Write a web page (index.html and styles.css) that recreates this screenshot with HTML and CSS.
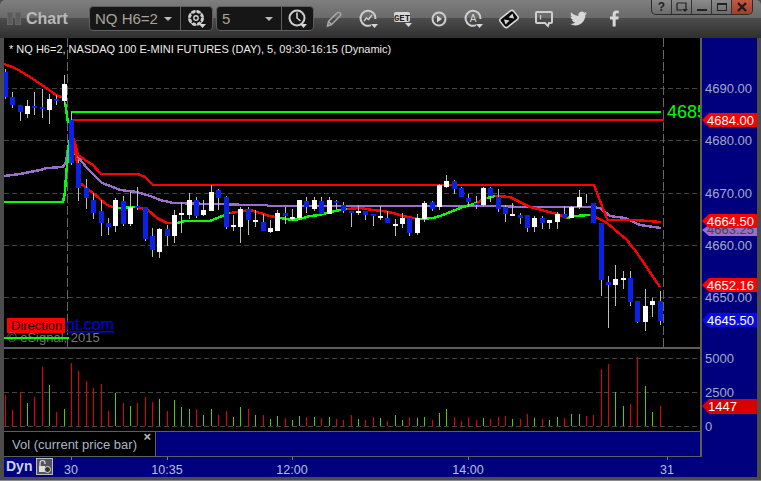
FILE: index.html
```html
<!DOCTYPE html>
<html lang="en">
<head>
<meta charset="utf-8">
<title>Chart</title>
<link rel="stylesheet" href="styles.css">
</head>
<body>
<div class="window">
  <header class="titlebar">
    <div class="brand"><span class="grip"></span><span class="grip"></span><span class="brand-name">Chart</span></div>
    <div class="combo combo-symbol">
      <span class="combo-field">NQ H6=2<i class="caret"></i></span>
      <span class="combo-btn">
        <svg class="icon" width="22" height="22" viewBox="0 0 22 22"><circle class="ln" cx="10" cy="10" r="6.5" stroke-width="3" stroke-dasharray="3.5 1.6"/><circle class="ln" cx="10" cy="10" r="7" stroke-width="1.2"/><circle class="ln" cx="10" cy="10" r="2.2" stroke-width="1.4"/><path class="fl" d="M13 16h7l-3.500 4z"/></svg>
      </span>
    </div>
    <div class="combo combo-interval">
      <span class="combo-field">5<i class="caret"></i></span>
      <span class="combo-btn">
        <svg class="icon" width="22" height="22" viewBox="0 0 22 22"><circle class="ln" cx="10" cy="10" r="7.500" stroke-width="2"/><path class="ln" stroke-width="1.600" d="M10 4.500V10l3.500 3"/><path class="fl" d="M13 16h7l-3.500 4z"/></svg>
      </span>
    </div>
    <nav class="tools">
      <span class="tool"><svg width="18" height="18" viewBox="0 0 18 18"><path class="ln dim" stroke-width="1.500" d="M2.500 16l1-4.500L12 3a1.800 1.800 0 0 1 3 3l-8.500 8.500zM3.500 11.500l3 3"/></svg></span>
      <span class="tool"><svg width="22" height="22" viewBox="0 0 22 22"><path class="ln" stroke-width="2" d="M13 17.200A7.500 7.500 0 1 1 17.500 11"/><path class="ln" stroke-width="1.500" d="M6 13l2.500-3 2 1.500L14 7"/><path class="fl" d="M13 16h7l-3.500 4z"/></svg></span>
      <span class="tool"><svg width="24" height="20" viewBox="0 0 24 20"><rect class="fl" x="2" y="3" width="16" height="10" rx="2"/><text class="get-text" x="10" y="11.500">GET</text><path class="fl" d="M13 14h7l-3.500 4z"/></svg></span>
      <span class="tool"><svg width="20" height="20" viewBox="0 0 20 20"><circle class="ln" cx="10" cy="10" r="6.500" stroke-width="2"/><path class="fl" d="M8 6.500l5 3.500-5 3.500z"/></svg></span>
      <span class="tool"><svg width="22" height="22" viewBox="0 0 22 22"><path class="ln" stroke-width="2" d="M13 17.200A7.500 7.500 0 1 1 17.500 11"/><text class="circle-a" x="10" y="14">A</text><path class="fl" d="M13 16h7l-3.500 4z"/></svg></span>
      <span class="tool"><svg width="20" height="20" viewBox="0 0 20 20"><rect x="1.500" y="4.500" width="17" height="11" rx="2.500" fill="#0c0c0c" stroke="#d8d8d8" stroke-width="1.600" transform="rotate(-38 10 10)"/><path class="fl" d="M13.500 4.500l1.500 5-5.500-1zM6.500 15.500l-1.500-5 5.500 1z"/></svg></span>
      <span class="tool"><svg width="20" height="20" viewBox="0 0 20 20"><path class="ln" stroke-width="2" d="M3 3h14a1 1 0 0 1 1 1v9a1 1 0 0 1-1 1h-2l-1 3-3-3H3a1 1 0 0 1-1-1V4a1 1 0 0 1 1-1z"/><path class="ln" stroke-width="1.200" d="M6.500 6v4.500"/></svg></span>
      <span class="tool"><svg width="17" height="17" viewBox="0 0 24 24"><path class="fl" d="M23.950 4.570a10 10 0 0 1-2.820.77 4.960 4.960 0 0 0 2.160-2.720c-.95.55-2 .96-3.130 1.200a4.920 4.920 0 0 0-8.380 4.480C7.690 8.090 4.070 6.130 1.640 3.160a4.820 4.820 0 0 0-.67 2.480c0 1.710.87 3.210 2.190 4.100a4.900 4.900 0 0 1-2.230-.62v.06a4.920 4.920 0 0 0 3.950 4.830 5 5 0 0 1-2.210.08 4.940 4.940 0 0 0 4.600 3.420A9.870 9.870 0 0 1 0 19.540a14 14 0 0 0 7.560 2.210c9.050 0 14-7.500 14-13.980 0-.21 0-.42-.02-.63A9.940 9.940 0 0 0 24 4.590z"/></svg></span>
      <span class="tool"><svg width="16" height="17" viewBox="0 0 24 24"><path class="fl" d="M14.500 24V13.500h4l.6-4.500h-4.600V6.200c0-1.300.4-2.200 2.200-2.200h2.500V.2C18.300.1 17 0 15.500 0 12.300 0 10 2 10 5.600V9H6v4.500h4V24z"/></svg></span>
    </nav>
    <div class="winctl">
      <span class="winbtn">?</span>
      <span class="winbtn"><svg width="14" height="12" viewBox="0 0 14 12"><path class="win-ln" d="M2 2h9v6M2 2v7h5"/><path class="win-fl" d="M7 8h6l-3 3z"/></svg></span>
      <span class="winbtn"><i class="win-min"></i></span>
      <span class="winbtn"><i class="win-max"></i></span>
      <span class="winbtn winbtn-close"><svg width="12" height="10" viewBox="0 0 12 10"><path class="win-x" d="M2 1l8 8M10 1l-8 8"/></svg></span>
    </div>
  </header>

  <main class="workspace">
    <div class="panes">
      <section class="pane-price">
        <svg width="696" height="309" viewBox="4 38 696 309" class="plot">
          <path class="grid" d="M4 88.500H700M4 140.500H700M4 193.500H700M4 245.500H700M4 297.500H700"/>
          <path class="vgrid" d="M67.500 38V347M663.500 38V347"/>
          <path class="level-g" d="M71 112H661"/>
          <path class="level-r" d="M72 120H664"/>
          <path class="purple" d="M4 176L20 174L40 170L47 168L63 167L66 162L68 148L78 157L87 168L97 178L102 183L113 187L120 190L137 192L150 196L160 200L173 203L250 205L267 205L268 206L500 206L520 207L590 207L600 208L610 216L625 218L640 225L661 228"/>
          <path class="red" d="M4 64L15 68L30 77L45 87L56 95L64 98"/>
          <path class="green" d="M4 202L63 202L65 192L66 175L68 157L69 140M65 102L68 123"/>
          <path class="red" d="M72 135L75 143L78 155L85 160L93 165L101 174L138 174L145 177L153 185L594 185L607 219L608 220L635 220L661 222"/>
          <path class="red" d="M74 143L80 183L93 193L107 205L116 208M137 207L148 210L157 218L167 223L177 223M230 213L250 210L260 213L270 216L280 218M347 209L360 208L373 210L383 211L393 213L403 216L413 218L420 219M477 203L482 200L487 198M495 196L510 197L530 207L557 214L567 218M590 215L592 215L607 223L627 240L637 253L660 287"/>
          <path class="green" d="M116 208L137 207M177 223L185 221L210 221L230 213M280 218L293 220L300 219L310 216L320 215L330 212L340 210L347 209M420 219L433 218L440 216L453 211L463 207L477 203M487 198L495 196M567 218L575 216L590 215"/>
          <path class="wick" d="M5.500 69V99M12.500 92V108M20.500 105V121M27.500 100V118M34.500 92V115M42.500 89V118M49.500 94V124M56.500 95V105M64.500 75V105M71.500 112V165M78.500 160V201M86.500 179V209M93.500 193V219M101.500 200V236M108.500 218V235M115.500 198V232M123.500 196V226M130.500 192V226M137.500 187V210M145.500 207V241M152.500 228V257M159.500 228V258M167.500 225V246M174.500 210V243M181.500 202V233M189.500 193V219M196.500 197V218M203.500 200V216M211.500 185V211M218.500 189V210M226.500 196V229M233.500 215V231M240.500 207V243M248.500 207V235M255.500 210V227M263.500 214V231M270.500 220V233M277.500 210V231M285.500 207V224M292.500 209V221M299.500 200V220M306.500 197V213M314.500 197V211M321.500 197V214M329.500 197V214M336.500 200V209M343.500 202V213M351.500 211V227M358.500 205V215M365.500 211V220M373.500 214V226M380.500 206V220M387.500 211V223M395.500 219V236M402.500 213V228M409.500 218V236M417.500 214V235M424.500 201V222M432.500 201V211M439.500 184V210M446.500 175V188M454.500 180V194M461.500 187V197M468.500 194V207M476.500 196V209M483.500 187V207M490.500 187V202M498.500 189V212M505.500 205V222M512.500 203V216M520.500 213V224M527.500 215V232M534.500 216V232M542.500 216V229M549.500 220V229M557.500 212V229M564.500 206V218M571.500 206V218M579.500 190V209M586.500 194V203M593.500 203V223M601.500 223V296M608.500 276V328M615.500 265V306M623.500 271V289M630.500 271V306M637.500 301V323M645.500 289V331M652.500 298V317M660.500 291V325"/>
          <path class="body-blue" d="M3 72h5v25h-5zM10 97h5v8h-5zM18 105h5v7h-5zM32 106h5v2h-5zM40 107h5v2h-5zM54 99h5v2h-5zM69 120h5v43h-5zM76 163h5v25h-5zM84 188h5v10h-5zM91 200h5v13h-5zM99 211h5v12h-5zM106 223h5v4h-5zM121 201h5v23h-5zM135 206h5v2h-5zM143 207h5v32h-5zM150 236h5v14h-5zM165 229h5v7h-5zM194 200h5v16h-5zM216 190h5v8h-5zM224 197h5v30h-5zM246 209h5v11h-5zM261 222h5v9h-5zM283 213h5v3h-5zM304 201h5v6h-5zM319 201h5v13h-5zM334 201h5v2h-5zM341 205h5v6h-5zM349 211h5v2h-5zM363 211h5v4h-5zM371 214h5v2h-5zM385 218h5v5h-5zM407 218h5v15h-5zM430 202h5v7h-5zM452 181h5v8h-5zM459 188h5v9h-5zM466 198h5v4h-5zM474 203h5v2h-5zM488 188h5v8h-5zM496 197h5v12h-5zM503 207h5v7h-5zM518 215h5v3h-5zM525 215h5v13h-5zM540 218h5v5h-5zM562 214h5v4h-5zM591 203h5v20h-5zM599 223h5v57h-5zM606 282h5v3h-5zM628 278h5v24h-5zM635 301h5v21h-5zM658 301h5v20h-5z"/>
          <path class="body-white" d="M25 106h5v8h-5zM47 99h5v11h-5zM62 84h5v17h-5zM113 200h5v26h-5zM128 207h5v17h-5zM157 229h5v23h-5zM172 215h5v21h-5zM179 213h5v2h-5zM187 200h5v15h-5zM201 210h5v5h-5zM209 192h5v19h-5zM231 225h5v2h-5zM238 209h5v18h-5zM253 220h5v2h-5zM268 228h5v4h-5zM275 213h5v18h-5zM290 217h5v2h-5zM297 200h5v18h-5zM312 200h5v9h-5zM327 200h5v14h-5zM356 211h5v2h-5zM378 216h5v2h-5zM393 224h5v2h-5zM400 218h5v6h-5zM415 218h5v15h-5zM422 203h5v16h-5zM437 185h5v22h-5zM444 181h5v6h-5zM481 188h5v17h-5zM510 214h5v2h-5zM532 218h5v9h-5zM547 220h5v3h-5zM555 214h5v8h-5zM569 207h5v11h-5zM577 197h5v10h-5zM613 279h5v6h-5zM621 278h5v2h-5zM643 306h5v16h-5zM650 301h5v4h-5z"/>
          <text class="t-head" x="9" y="53">* NQ H6=2, NASDAQ 100 E-MINI FUTURES (DAY), 5, 09:30-16:15 (Dynamic)</text>
          <text class="t-level" x="667" y="118">4685</text>
          <text class="t-link" x="66" y="330">nt.com</text>
          <rect class="dir-box" x="7" y="318" width="58" height="15"/>
          <text class="t-dir" x="11" y="330">Direction</text>
          <text class="t-copy" x="7" y="342">© eSignal, 2015</text>
          <path class="green" d="M4 338H69"/>
        </svg>
      </section>
      <section class="pane-volume">
        <svg width="696" height="82" viewBox="4 349 696 82" class="plot">
          <path class="grid" d="M4 358.500H700M4 392.500H700M4 426.500H700"/>
          <path class="vol-red" d="M5.500 395V426M12.500 410V426M20.500 392V426M34.500 397V426M42.500 367V426M56.500 412V426M71.500 363V426M78.500 371V426M86.500 381V426M93.500 388V426M101.500 384V426M108.500 411V426M123.500 403V426M137.500 403V426M145.500 397V426M152.500 402V426M167.500 411V426M196.500 409V426M218.500 415V426M226.500 411V426M248.500 409V426M263.500 415V426M285.500 418V426M306.500 417V426M321.500 418V426M336.500 419V426M343.500 420V426M351.500 415V426M365.500 420V426M373.500 417V426M387.500 421V426M409.500 417V426M432.500 420V426M454.500 417V426M461.500 421V426M468.500 417V426M476.500 420V426M490.500 419V426M498.500 417V426M505.500 416V426M520.500 419V426M527.500 414V426M542.500 419V426M564.500 418V426M586.500 416V426M593.500 415V426M601.500 369V426M608.500 364V426M630.500 404V426M637.500 357V426M660.500 406V426"/>
          <path class="vol-green" d="M27.500 403V426M49.500 385V426M64.500 409V426M115.500 393V426M130.500 406V426M159.500 399V426M174.500 400V426M181.500 407V426M189.500 409V426M203.500 415V426M211.500 409V426M233.500 417V426M240.500 407V426M255.500 415V426M270.500 419V426M277.500 416V426M292.500 420V426M299.500 416V426M314.500 417V426M329.500 417V426M358.500 419V426M380.500 418V426M395.500 415V426M402.500 420V426M417.500 418V426M424.500 417V426M439.500 413V426M446.500 409V426M483.500 418V426M512.500 419V426M534.500 418V426M549.500 420V426M557.500 417V426M571.500 414V426M579.500 414V426M615.500 392V426M623.500 406V426M645.500 386V426M652.500 412V426"/>
        </svg>
      </section>
      <section class="legend">
        <div class="legend-label">Vol (current price bar)<span class="legend-close">×</span></div>
        <div class="legend-fill"></div>
      </section>
    </div>
    <aside class="axis">
      <svg width="55" height="419" viewBox="702 38 55 419">
        <text class="t-axis" x="705" y="93">4690.00</text>
        <text class="t-axis" x="705" y="145">4680.00</text>
        <text class="t-axis" x="705" y="198">4670.00</text>
        <text class="t-axis" x="705" y="250">4660.00</text>
        <text class="t-axis" x="705" y="302">4650.00</text>
        <polygon class="tag-red" points="702,120 709,113 757,113 757,127 709,127"/>
        <text class="t-tag" x="707" y="125">4684.00</text>
        <polygon class="tag-purple" points="702,230 709,225 757,225 757,236 709,236"/>
        <text class="t-tag-dark" x="707" y="234">4663.25</text>
        <polygon class="tag-red" points="702,221 709,214 757,214 757,228 709,228"/>
        <text class="t-tag" x="707" y="226">4664.50</text>
        <polygon class="tag-red" points="702,285 709,278 757,278 757,292 709,292"/>
        <text class="t-tag" x="707" y="290">4652.16</text>
        <polygon class="tag-blue" points="702,320 709,313 757,313 757,327 709,327"/>
        <text class="t-tag" x="707" y="325">4645.50</text>
        <text class="t-axis" x="705" y="363">5000</text>
        <text class="t-axis" x="705" y="397">2500</text>
        <text class="t-axis" x="705" y="431">0</text>
        <polygon class="tag-dark" points="702,406 709,399 757,399 757,414 709,414"/>
        <text class="t-tag" x="708" y="411">1447</text>
      </svg>
    </aside>
    <footer class="timeaxis">
      <svg width="753" height="20" viewBox="4 457 753 20">
        <path class="tick" d="M71.500 456V460M167.500 456V460M292.500 456V460M468.500 456V460M667.500 456V460"/>
        <text class="t-dyn" x="6" y="471">Dyn</text>
        <rect class="lock-box" x="36.500" y="458.500" width="16" height="16"/>
        <path class="lock-ln" d="M40 466v-3a2.500 2.500 0 0 1 5 0v1"/>
        <rect class="lock-fl" x="39" y="466" width="6" height="6"/>
        <circle class="lock-clock" cx="47.500" cy="469.500" r="3"/>
        <text class="t-time" x="71" y="474">30</text>
        <text class="t-time" x="167" y="474">10:35</text>
        <text class="t-time" x="292" y="474">12:00</text>
        <text class="t-time" x="468" y="474">14:00</text>
        <text class="t-time" x="667" y="474">31</text>
      </svg>
    </footer>
  </main>
</div>
</body>
</html>
```

FILE: styles.css
```css
* { box-sizing: border-box; }
html, body { margin: 0; padding: 0; background: #000; }
body { font-family: "Liberation Sans", Arial, sans-serif; overflow: hidden; }
svg { display: block; }

.window {
  width: 761px;
  height: 481px;
  display: flex;
  flex-direction: column;
  background: #4c4c4c;
  border-bottom: 1px solid #8a8a8a;
}

/* Title bar */
.titlebar {
  height: 38px;
  flex: none;
  display: flex;
  align-items: center;
  padding: 0 8px 1px 7px;
  border-radius: 5px 5px 0 0;
  background: linear-gradient(#7e7e7e 0, #6a6a6a 18px, #4d4d4d 18px, #2f2f2f 38px);
}
.brand { display: flex; align-items: center; gap: 2px; width: 82px; flex: none; }
.grip { width: 6px; height: 13px; border: 1px solid #666; background: #5c5c5c; }
.brand-name { margin-left: 3px; font-size: 16px; font-weight: bold; color: #b9b9b9; }

.combo {
  height: 25px;
  display: flex;
  flex: none;
  background: #161616;
  border: 1px solid #5e5e5e;
  border-radius: 4px;
  color: #a9a398;
  font-size: 15px;
}
.combo-symbol { width: 124px; }
.combo-interval { width: 98px; margin-left: 3px; }
.combo-field { flex: 1; display: flex; align-items: center; justify-content: space-between; padding: 0 8px 0 5px; }
.combo-btn { width: 32px; flex: none; border-left: 1px solid #5e5e5e; display: flex; align-items: center; justify-content: center; }
.caret { width: 0; height: 0; border: 4px solid transparent; border-top-color: #bbb; border-bottom: 0; }

.tools { display: flex; margin-left: 2px; flex: none; }
.tool { width: 35px; height: 26px; display: flex; align-items: center; justify-content: center; }
.ln { fill: none; stroke: #cfcfcf; }
.ln.dim { stroke: #a8a8a8; }
.fl { fill: #d8d8d8; }
.get-text { font: bold 9px "Liberation Mono", monospace; fill: #222; text-anchor: middle; }
.circle-a { font: 10px "Liberation Sans", sans-serif; fill: #d8d8d8; text-anchor: middle; }

.winctl {
  margin-left: auto;
  align-self: flex-start;
  display: flex;
  height: 15px;
  border: 1px solid #2a2a2a;
  border-top: 0;
  border-radius: 0 0 5px 5px;
  overflow: hidden;
  background: linear-gradient(#8a8a8a, #6c6c6c);
}
.winbtn {
  width: 20px;
  display: flex;
  align-items: center;
  justify-content: center;
  border-right: 1px solid #333;
  font-size: 12px;
  font-weight: bold;
  color: #222;
}
.winbtn-close { border-right: 0; background: linear-gradient(#c05a48, #a83c2c); }
.win-ln { fill: none; stroke: #222; stroke-width: 1.2; }
.win-fl { fill: #222; }
.win-min { width: 10px; height: 2px; margin-top: 5px; background: #222; }
.win-max { width: 10px; height: 8px; border: 1px solid #222; border-top-width: 2px; }
.win-x { fill: none; stroke: #1c1c1c; stroke-width: 2.4; }

/* Workspace */
.workspace {
  flex: 1;
  margin: 0 4px 3px;
  display: grid;
  grid-template-columns: 696px 57px;
  grid-template-rows: 419px 20px;
  background: #000;
}
.panes { display: flex; flex-direction: column; }
.pane-price { height: 309px; flex: none; background: #000; }
.pane-volume { height: 84px; flex: none; background: #000; border-top: 2px solid #5e5e5e; }
.legend {
  height: 26px;
  flex: none;
  display: flex;
  border-top: 1px solid #5e5e5e;
  border-bottom: 1px solid #5e5e5e;
}
.legend-label {
  width: 151px;
  flex: none;
  position: relative;
  display: flex;
  align-items: center;
  padding-left: 8px;
  background: #000;
  color: #a9b6c8;
  font-size: 13px;
}
.legend-close { position: absolute; top: -3px; right: 4px; font-size: 13px; font-weight: bold; color: #bbb; }
.legend-fill { flex: 1; background: #00007f; border-left: 1px solid #5e5e5e; }

.axis { background: #00007f; border-left: 2px solid #5e5e5e; }
.timeaxis { grid-column: 1 / 3; background: #00007f; }

/* Plot styling */
.plot { overflow: hidden; }
.grid { fill: none; stroke: #444; stroke-width: 1; stroke-dasharray: 5 3; shape-rendering: crispEdges; }
.vgrid { fill: none; stroke: #666; stroke-width: 1; stroke-dasharray: 9 3; shape-rendering: crispEdges; }
.level-g { fill: none; stroke: #00ff00; stroke-width: 2; shape-rendering: crispEdges; }
.level-r { fill: none; stroke: #ff0000; stroke-width: 2; shape-rendering: crispEdges; }
.red { fill: none; stroke: #ff0000; stroke-width: 2.4; stroke-linejoin: round; shape-rendering: crispEdges; }
.green { fill: none; stroke: #00ff00; stroke-width: 2.4; stroke-linejoin: round; shape-rendering: crispEdges; }
.purple { fill: none; stroke: #9a6fcc; stroke-width: 2.4; stroke-linejoin: round; shape-rendering: crispEdges; }
.wick { fill: none; stroke: #bdbdbd; stroke-width: 1; shape-rendering: crispEdges; }
.body-blue { fill: #0a22e6; shape-rendering: crispEdges; }
.body-white { fill: #fff; shape-rendering: crispEdges; }
.vol-red { fill: none; stroke: #e60000; stroke-width: 1; shape-rendering: crispEdges; }
.vol-green { fill: none; stroke: #4ccc10; stroke-width: 1; shape-rendering: crispEdges; }

.t-head { font: 11px "Liberation Sans", sans-serif; fill: #ececec; }
.t-level { font: 18px "Liberation Sans", sans-serif; fill: #00ff00; }
.t-link { font: 16px "Liberation Sans", sans-serif; fill: #0000ee; text-decoration: underline; }
.dir-box { fill: #ff0000; }
.t-dir { font: 13px "Liberation Sans", sans-serif; fill: #111; }
.t-copy { font: 13px "Liberation Sans", sans-serif; fill: #777; }

.t-axis { font: 13px "Liberation Sans", sans-serif; fill: #a4aac4; }
.t-tag { font: 13px "Liberation Sans", sans-serif; fill: #fff; }
.t-tag-dark { font: 13px "Liberation Sans", sans-serif; fill: #444; }
.tag-red { fill: #ff0000; }
.tag-purple { fill: #9a6fcc; }
.tag-blue { fill: #0a0af0; }
.tag-dark { fill: #d80000; }

.tick { fill: none; stroke: #777; stroke-width: 1; shape-rendering: crispEdges; }
.t-dyn { font: bold 14px "Liberation Sans", sans-serif; fill: #c9d2ea; }
.t-time { font: 12.5px "Liberation Sans", sans-serif; fill: #b4c0da; text-anchor: middle; }
.lock-box { fill: #555; stroke: #bbb; stroke-width: 1; }
.lock-ln { fill: none; stroke: #ddd; stroke-width: 1.2; }
.lock-fl { fill: #ddd; }
.lock-clock { fill: #333; stroke: #ddd; stroke-width: 1; }
```
